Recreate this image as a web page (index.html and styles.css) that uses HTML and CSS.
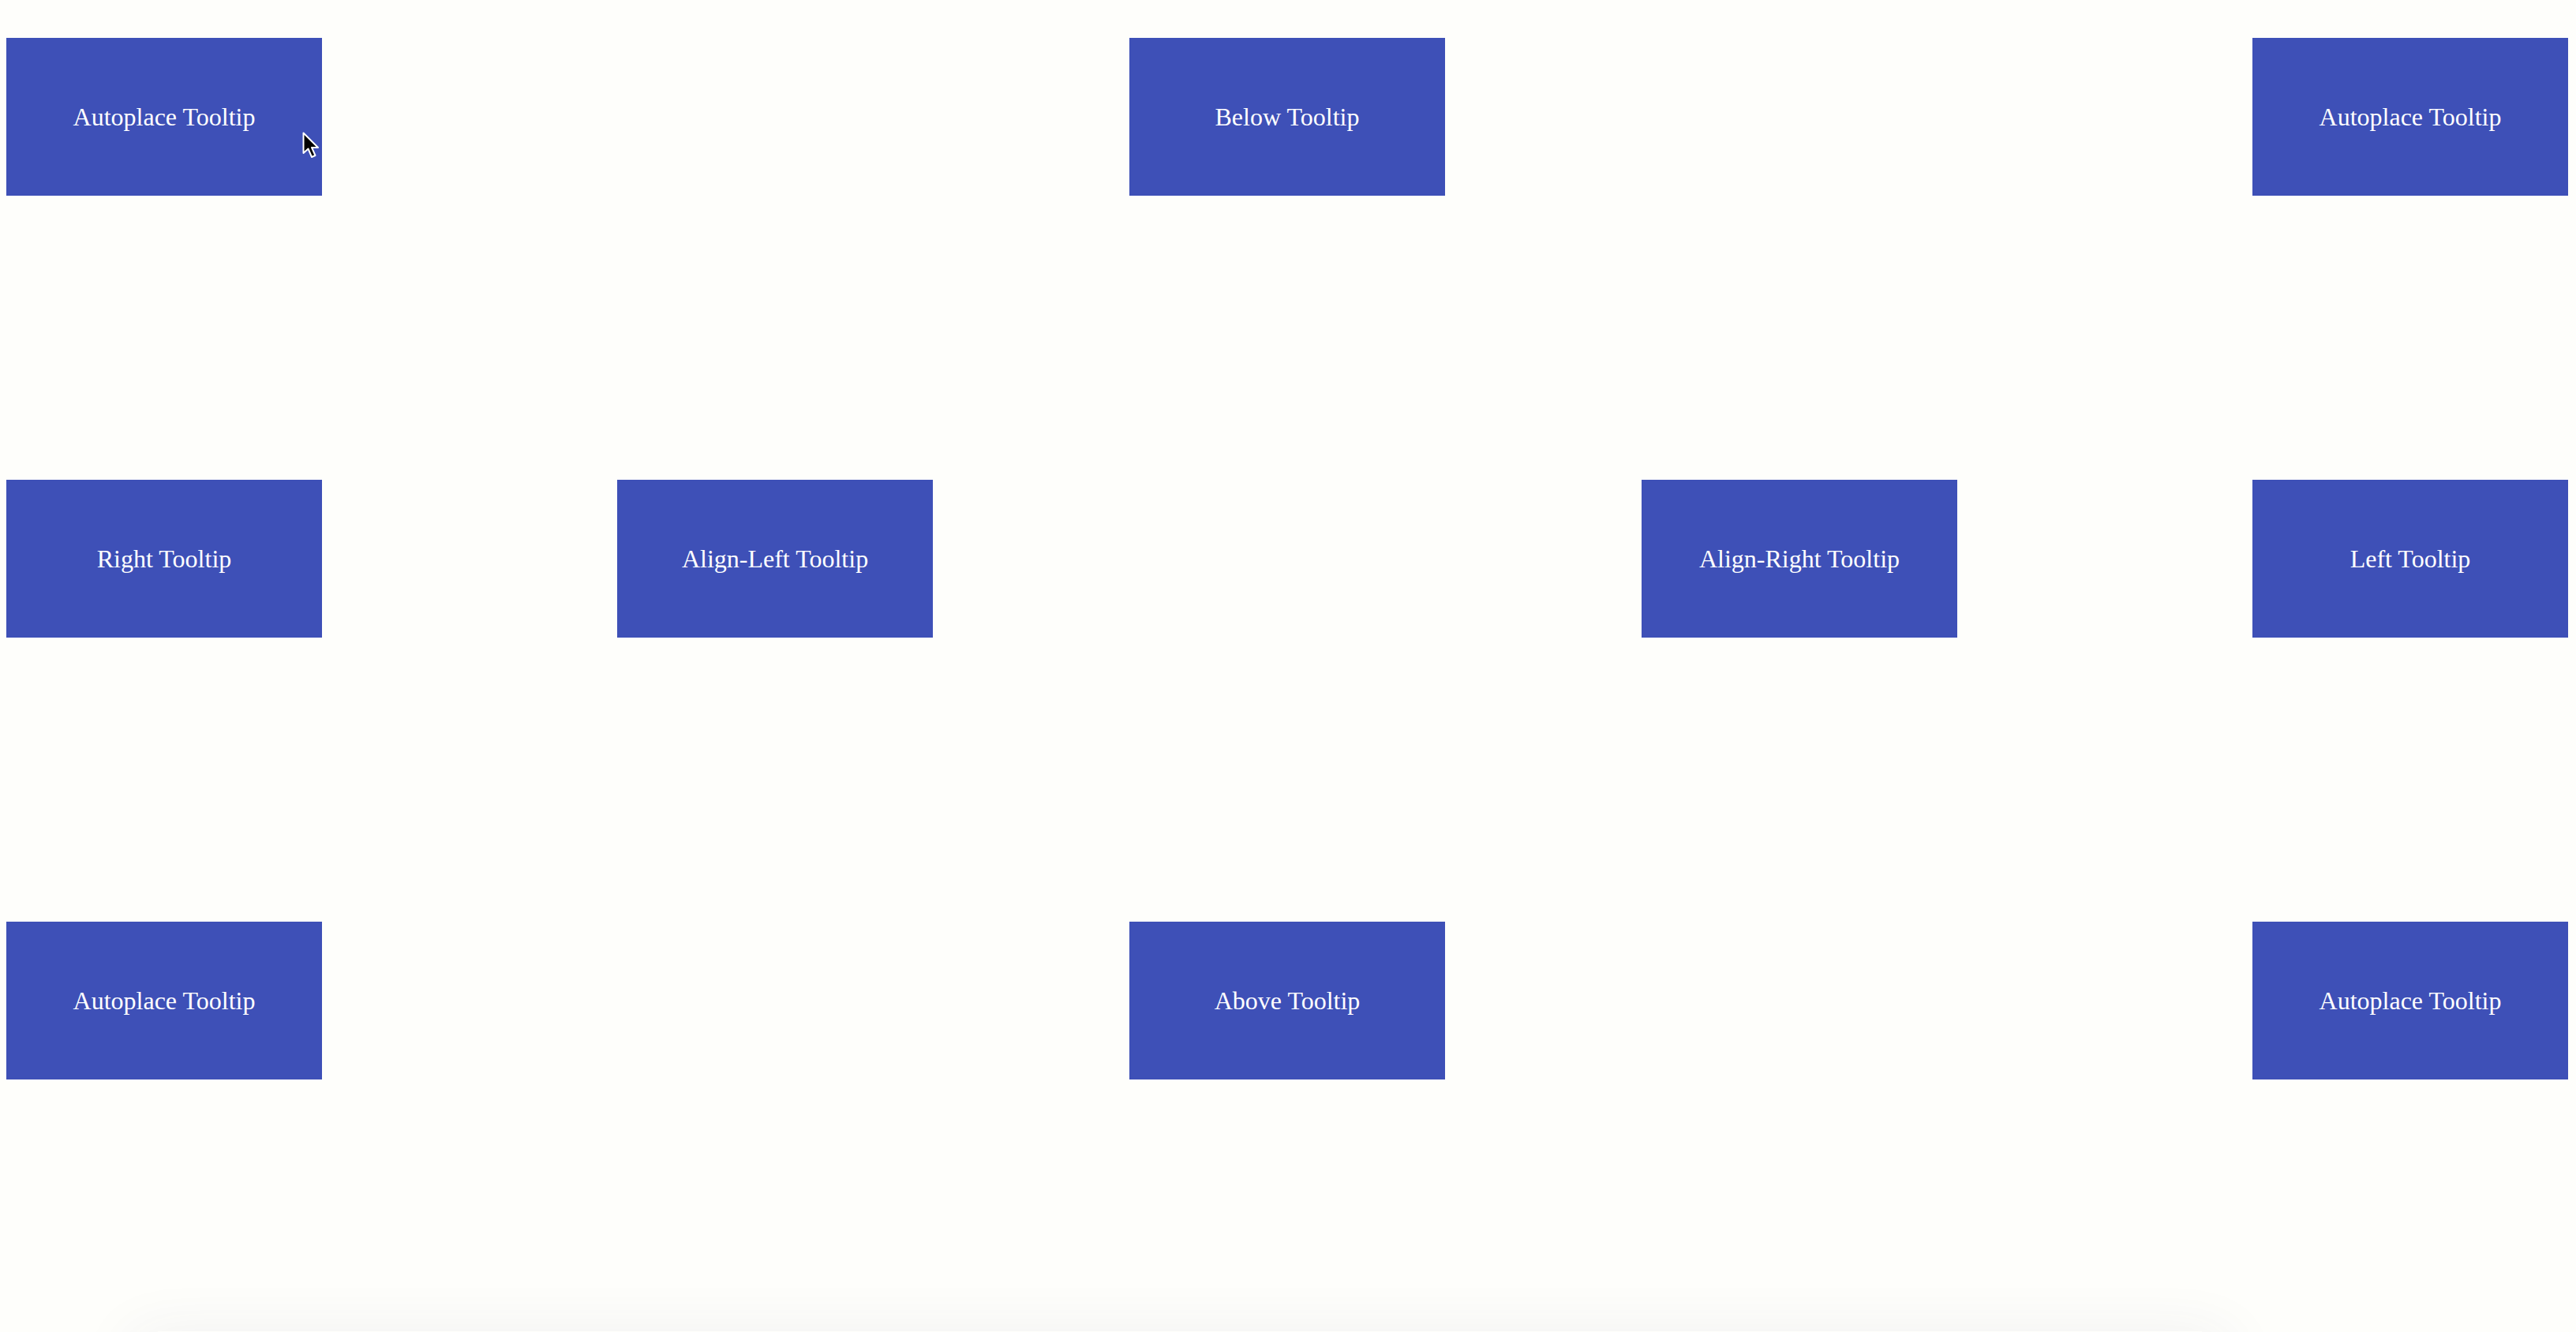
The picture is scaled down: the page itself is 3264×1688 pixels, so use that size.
FILE: index.html
```html
<!DOCTYPE html>
<html>
<head>
<meta charset="utf-8">
<link rel="stylesheet" href="styles.css">
</head>
<body>
<div class="page">
  <div class="row">
    <div class="box">Autoplace Tooltip</div>
    <div class="box">Below Tooltip</div>
    <div class="box">Autoplace Tooltip</div>
  </div>
  <div class="row">
    <div class="pair">
      <div class="box">Right Tooltip</div>
      <div class="box">Align-Left Tooltip</div>
    </div>
    <div class="pair">
      <div class="box">Align-Right Tooltip</div>
      <div class="box">Left Tooltip</div>
    </div>
  </div>
  <div class="row">
    <div class="box">Autoplace Tooltip</div>
    <div class="box">Above Tooltip</div>
    <div class="box">Autoplace Tooltip</div>
  </div>
</div>
<div class="shadow"></div>
<svg class="cursor" width="24" height="36" viewBox="0 0 24 36">
  <path d="M1.5 1.5 L1.5 27 L7.5 21.5 L12 32 L16.5 30 L12 20 L20 20 Z" fill="#000" stroke="#fff" stroke-width="2" stroke-linejoin="round"/>
</svg>
</body>
</html>
```
FILE: styles.css
```css
html, body {
  margin: 0;
  padding: 0;
  background: #fefefb;
  overflow: hidden;
}
body {
  width: 3264px;
  height: 1688px;
  position: relative;
}
.page {
  width: 3246px;
  padding: 48px 0 0 8px;
  display: flex;
  flex-direction: column;
  gap: 360px;
}
.row {
  display: flex;
  justify-content: space-between;
}
.pair {
  display: flex;
  gap: 374px;
}
.box {
  width: 400px;
  height: 200px;
  background: #3e50b7;
  color: #ffffff;
  font-family: "Liberation Serif", "Times New Roman", serif;
  font-size: 32px;
  display: flex;
  align-items: center;
  justify-content: center;
}
.shadow {
  position: absolute;
  left: 200px;
  width: 2590px;
  top: 1687px;
  height: 1px;
  background: transparent;
  box-shadow: 0 40px 80px 30px rgba(60, 60, 100, 0.09);
}
.cursor {
  position: absolute;
  left: 383px;
  top: 167px;
}
```
